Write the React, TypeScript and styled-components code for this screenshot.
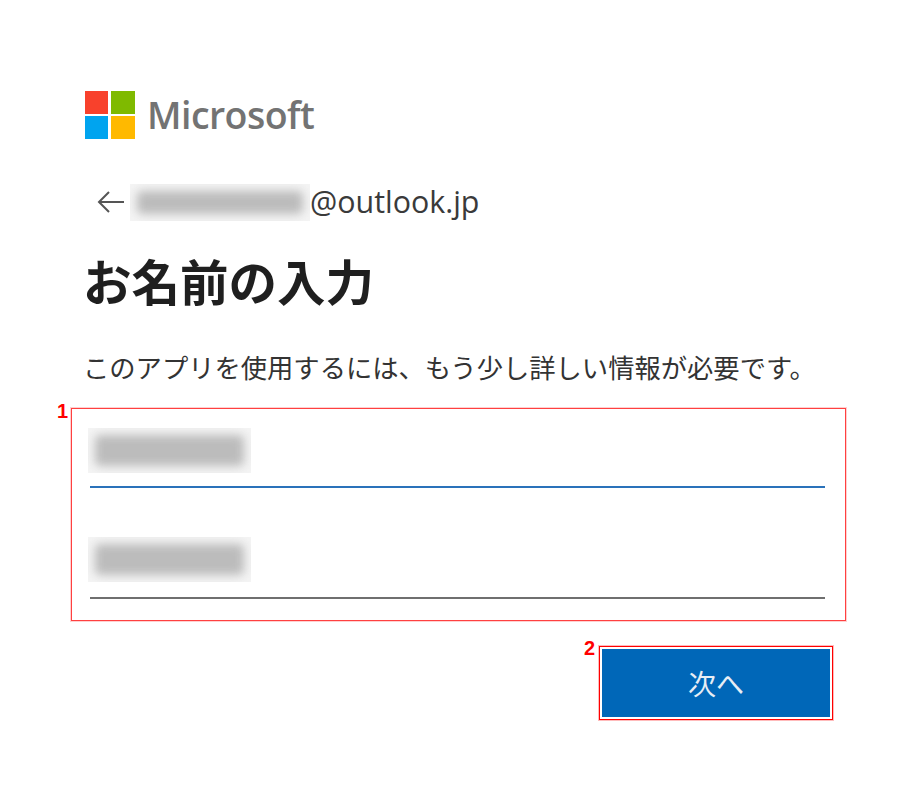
import React from "react";
import styled, { createGlobalStyle } from "styled-components";

const Global = createGlobalStyle`
  html, body { margin: 0; padding: 0; background: #fff; }
  body { font-family: "Open Sans", "Noto Sans CJK JP", sans-serif; color: #1b1b1b; }
`;

const Page = styled.main`
  width: 915px;
  height: 800px;
  box-sizing: border-box;
  padding: 91px 0 0 71px;
  overflow: hidden;
`;

const Brand = styled.header`
  display: flex;
  align-items: center;
  height: 48px;
  margin-left: 14px;
  gap: 12px;
`;

const Wordmark = styled.span`
  font-family: "Open Sans", sans-serif;
  font-weight: 600;
  font-size: 37.5px;
  line-height: 48px;
  letter-spacing: -0.55px;
  color: #737373;
`;

const Identity = styled.div`
  display: flex;
  align-items: center;
  height: 38px;
  margin: 44px 0 0 26px;
`;

const BackIcon = styled.svg`
  width: 28px;
  height: 24px;
  margin-right: 5px;
  flex: none;
`;

const BlurPatch = styled.div<{ $w: number; $h: number }>`
  width: ${(p) => p.$w}px;
  height: ${(p) => p.$h}px;
  flex: none;
  background: #f4f4f4;
  overflow: hidden;
  display: flex;
  align-items: center;
  justify-content: center;
`;

const BlurCore = styled.div`
  width: calc(100% - 14px);
  height: calc(100% - 14px);
  background: #bcbcbc;
  border-radius: 5px;
  filter: blur(5px);
`;

const Email = styled.span`
  font-family: "Open Sans", sans-serif;
  font-size: 30.4px;
  line-height: 38px;
  color: #3a3a3a;
`;

const Title = styled.h1`
  margin: 29px 0 0 12px;
  font-family: "Noto Sans CJK JP", sans-serif;
  font-weight: 700;
  font-size: 48.5px;
  line-height: 60px;
  color: #1f1f1f;
  white-space: nowrap;
`;

const Description = styled.p`
  margin: 37px 0 0 12px;
  font-family: "Noto Sans CJK JP", sans-serif;
  font-weight: 400;
  font-size: 26.3px;
  line-height: 40px;
  color: #333;
  white-space: nowrap;
`;

const Callout = styled.section`
  position: relative;
  box-sizing: border-box;
  width: 775px;
  height: 213px;
  margin-top: 21px;
  border: 1px solid #ff4040;
  outline: 1px solid #ffd0d0;
  outline-offset: 0;
  padding: 19px 20px 0 17px;
`;

const Marker = styled.span<{ $left: number; $top: number }>`
  position: absolute;
  left: ${(p) => p.$left}px;
  top: ${(p) => p.$top}px;
  font-family: "Liberation Sans", sans-serif;
  font-weight: 700;
  font-size: 20px;
  line-height: 20px;
  color: #f00;
`;

const Field = styled.div<{ $focused?: boolean; $h: number }>`
  height: ${(p) => p.$h}px;
  margin-bottom: 49px;
  border-bottom: 2px solid ${(p) => (p.$focused ? "#2a72ba" : "#6f6f6f")};
  margin-left: 1px;
  &:last-child { margin-bottom: 0; }
`;

const FieldPatch = styled(BlurPatch)`
  margin-left: -2px;
`;

const Actions = styled.div`
  display: flex;
  justify-content: flex-end;
  width: 762px;
  margin-top: 25px;
`;

const Highlight = styled.div`
  position: relative;
  box-sizing: border-box;
  width: 234px;
  height: 74px;
  border: 1px solid #f00;
  outline: 1px solid #fbb;
  outline-offset: 0;
  padding: 2px;
`;

const NextButton = styled.button`
  display: block;
  width: 100%;
  height: 100%;
  border: 0;
  padding: 0;
  background: #0067b8;
  color: #e8eef5;
  font-family: "Noto Sans CJK JP", sans-serif;
  font-size: 28px;
  line-height: 1;
`;

export default function App() {
  return (
    <>
      <Global />
      <Page>
        <Brand>
          <svg width="50" height="48" viewBox="0 0 50 48" aria-label="Microsoft logo">
            <rect x="0" y="0" width="23" height="23" fill="#f8412c" />
            <rect x="26" y="0" width="24" height="23" fill="#7fba00" />
            <rect x="0" y="25" width="23" height="23" fill="#00a4ef" />
            <rect x="26" y="25" width="24" height="23" fill="#ffb900" />
          </svg>
          <Wordmark>Microsoft</Wordmark>
        </Brand>
        <Identity>
          <BackIcon viewBox="0 0 28 24" fill="none" stroke="#555" strokeWidth="2">
            <path d="M27 12H2M12 2 2 12l10 10" />
          </BackIcon>
          <BlurPatch $w={180} $h={37}>
            <BlurCore />
          </BlurPatch>
          <Email>@outlook.jp</Email>
        </Identity>
        <Title>お名前の入力</Title>
        <Description>このアプリを使用するには、もう少し詳しい情報が必要です。</Description>
        <Callout>
          <Marker $left={-15} $top={-8}>1</Marker>
          <Field $focused $h={58}>
            <FieldPatch $w={163} $h={45}>
              <BlurCore />
            </FieldPatch>
          </Field>
          <Field $h={60}>
            <FieldPatch $w={163} $h={45}>
              <BlurCore />
            </FieldPatch>
          </Field>
        </Callout>
        <Actions>
          <Highlight>
            <Marker $left={-16} $top={-9}>2</Marker>
            <NextButton>次へ</NextButton>
          </Highlight>
        </Actions>
      </Page>
    </>
  );
}
